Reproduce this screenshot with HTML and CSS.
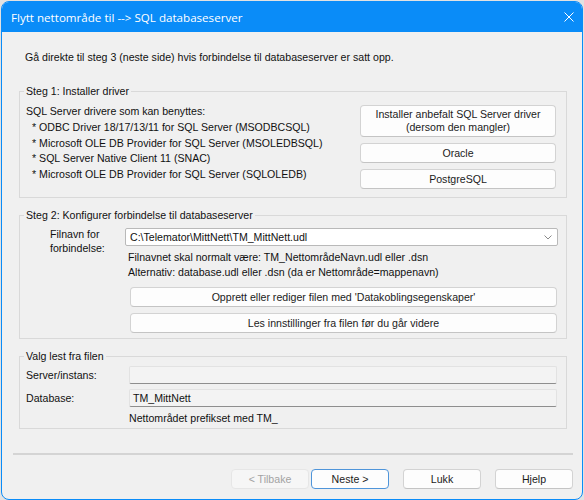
FILE: index.html
```html
<!DOCTYPE html>
<html lang="no">
<head>
<meta charset="utf-8">
<title>Flytt nettområde til SQL databaseserver</title>
<link rel="stylesheet" href="styles.css">
</head>
<body>
<div class="window">
  <div class="titlebar">
    <span class="title">Flytt nettområde til --&gt; SQL databaseserver</span>
    <svg class="close" width="10" height="10" viewBox="0 0 10 10"><path d="M0.5 0.5L9.5 9.5M9.5 0.5L0.5 9.5" stroke="#fff" stroke-width="1" fill="none"/></svg>
  </div>
  <div class="content">
    <p class="intro">Gå direkte til steg 3 (neste side) hvis forbindelse til databaseserver er satt opp.</p>

    <fieldset class="group">
      <legend>Steg 1: Installer driver</legend>
      <div class="g1-row">
        <div class="drivers">
          <div>SQL Server drivere som kan benyttes:</div>
          <div class="ind">* ODBC Driver 18/17/13/11 for SQL Server (MSODBCSQL)</div>
          <div class="ind">* Microsoft OLE DB Provider for SQL Server (MSOLEDBSQL)</div>
          <div class="ind">* SQL Server Native Client 11 (SNAC)</div>
          <div class="ind">* Microsoft OLE DB Provider for SQL Server (SQLOLEDB)</div>
        </div>
        <div class="g1-buttons">
          <button class="btn tall">Installer anbefalt SQL Server driver<br>(dersom den mangler)</button>
          <button class="btn">Oracle</button>
          <button class="btn">PostgreSQL</button>
        </div>
      </div>
    </fieldset>

    <fieldset class="group">
      <legend>Steg 2: Konfigurer forbindelse til databaseserver</legend>
      <div class="g2-grid">
        <div class="file-label">Filnavn for<br>forbindelse:</div>
        <div class="g2-right">
          <div class="combo">
            <span>C:\Telemator\MittNett\TM_MittNett.udl</span>
            <svg class="chev" width="8" height="5" viewBox="0 0 8 5"><path d="M0.5 0.5L4 4L7.5 0.5" stroke="#8a8a8a" stroke-width="1" fill="none"/></svg>
          </div>
          <div class="hint first">Filnavnet skal normalt være: TM_NettområdeNavn.udl eller .dsn</div>
          <div class="hint">Alternativ: database.udl eller .dsn (da er Nettområde=mappenavn)</div>
          <button class="btn wide first-btn">Opprett eller rediger filen med 'Datakoblingsegenskaper'</button>
          <button class="btn wide">Les innstillinger fra filen før du går videre</button>
        </div>
      </div>
    </fieldset>

    <fieldset class="group">
      <legend>Valg lest fra filen</legend>
      <div class="g3-grid">
        <div class="lbl">Server/instans:</div>
        <div class="field"></div>
        <div class="lbl">Database:</div>
        <div class="field">TM_MittNett</div>
        <div></div>
        <div class="note">Nettområdet prefikset med TM_</div>
      </div>
    </fieldset>

    <div class="separator"></div>

    <div class="footer">
      <button class="btn fbtn disabled">&lt; Tilbake</button>
      <button class="btn fbtn default">Neste &gt;</button>
      <button class="btn fbtn">Lukk</button>
      <button class="btn fbtn">Hjelp</button>
    </div>
  </div>
</div>
</body>
</html>
```
FILE: styles.css
```css
* { box-sizing: border-box; }

body {
  margin: 0;
  background: #e2e2e2;
  font-family: "Liberation Sans", Arial, sans-serif;
  font-size: 10.6px;
  color: #111;
}

.window {
  margin: 1px 0 0 1px;
  width: 582px;
  height: 499px;
  border: 1px solid #0a8cf8;
  border-radius: 8px;
  background: #f0f0f0;
  overflow: hidden;
  display: flex;
  flex-direction: column;
}

.titlebar {
  height: 30px;
  flex: none;
  background: #0a8cf8;
  color: #fff;
  display: flex;
  align-items: center;
  justify-content: space-between;
  padding: 0 8px 0 9px;
  font-family: "Open Sans", "Noto Sans", sans-serif;
  font-size: 11.6px;
}

.close { display: block; }

.content {
  display: flex;
  flex-direction: column;
}

.intro {
  margin: 17px 0 0 23px;
  line-height: 16px;
}

.group {
  margin: 18px 15px 0 17px;
  padding: 0;
  border: 1px solid #d9d9d9;
  min-width: 0;
}
.group + .group { margin-top: 9px; }

.group legend {
  margin-left: 4px;
  padding: 0 2px;
  line-height: 16px;
}

.g1-row {
  display: flex;
  justify-content: space-between;
  align-items: flex-start;
  padding: 6px 10px 8px 6px;
}

.drivers {
  margin-top: -1px;
  line-height: 15.75px;
  white-space: nowrap;
}
.ind { padding-left: 6px; }

.g1-buttons {
  width: 196px;
  display: flex;
  flex-direction: column;
  gap: 6px;
}

.btn {
  font: inherit;
  color: #1b1b1b;
  background: #fdfdfd;
  border: 1px solid #d3d3d3;
  border-bottom-color: #c4c4c4;
  border-radius: 4px;
  padding: 0;
  height: 20px;
  line-height: 16px;
  text-align: center;
}
.btn.tall { height: 32px; line-height: 13px; }

.g2-grid {
  display: grid;
  grid-template-columns: 105px 1fr;
  padding: 5px 8px 5px 0;
}

.file-label {
  padding-left: 30px;
  margin-top: -1px;
  line-height: 14px;
}

.g2-right {
  display: flex;
  flex-direction: column;
}

.combo {
  height: 18px;
  background: #fff;
  border: 1px solid #b9b9b9;
  border-radius: 2px;
  display: flex;
  align-items: center;
  justify-content: space-between;
  padding: 0 5px 0 4px;
  line-height: 16px;
}
.chev { display: block; }

.hint {
  padding-left: 3px;
  line-height: 15px;
}
.hint.first { margin-top: 4px; }

.btn.wide { margin: 0 1px 0 5px; }
.btn.wide + .btn.wide { margin-top: 6px; }
.first-btn { margin-top: 7px !important; }

.g3-grid {
  display: grid;
  grid-template-columns: 103px 1fr;
  row-gap: 5px;
  align-items: center;
  padding: 2px 9px 2px 6px;
}

.lbl { line-height: 15px; }

.field {
  height: 18px;
  background: #f3f3f3;
  border: 1px solid #e2e2e2;
  border-bottom-color: #8e8e8e;
  border-radius: 2px;
  padding: 0 3px;
  line-height: 16px;
}

.note {
  margin-top: -1px;
  line-height: 15px;
}

.separator {
  height: 2px;
  background: #d4d4d4;
  margin: 24px 9px 0 11px;
}

.footer {
  display: flex;
  justify-content: flex-end;
  margin-top: 14px;
  padding-right: 9px;
}

.fbtn { width: 78px; margin-left: 14px; }
.fbtn.default { margin-left: 2px; border-color: #4f95da; }
.fbtn.disabled {
  color: #a3a3a3;
  background: #f6f6f6;
  border-color: #e6e6e6;
}
```
